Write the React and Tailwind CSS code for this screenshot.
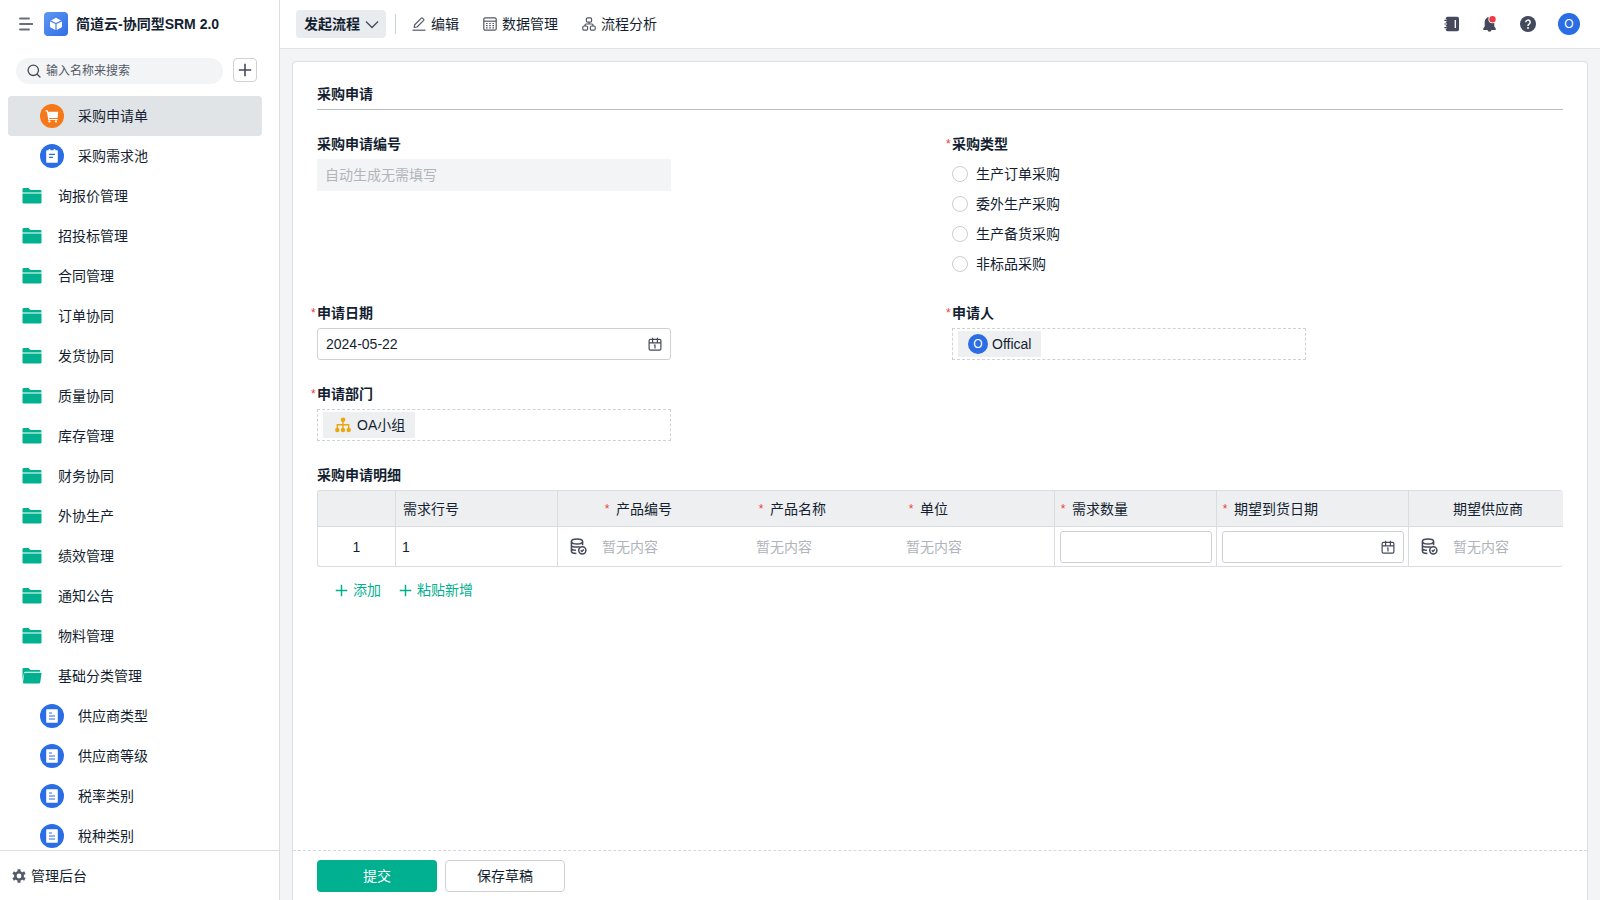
import React, { useState } from 'react';

const FOLDERS = [
  '询报价管理', '招投标管理', '合同管理', '订单协同', '发货协同', '质量协同', '库存管理',
  '财务协同', '外协生产', '绩效管理', '通知公告', '物料管理',
];
const CATEGORIES = ['供应商类型', '供应商等级', '税率类别', '稅种类别'];
const TYPES = ['生产订单采购', '委外生产采购', '生产备货采购', '非标品采购'];

const MenuIcon = () => (
  <svg width="14" height="14" viewBox="0 0 14 14" fill="none" stroke="#6a6f7b" strokeWidth="1.8" strokeLinecap="round">
    <path d="M1 1.5h9M1 7h12.500M1 12.500h9" />
  </svg>
);

const SearchIcon = () => (
  <svg width="14" height="14" viewBox="0 0 14 14" fill="none" stroke="#444a5b" strokeWidth="1.300" strokeLinecap="round">
    <circle cx="6.300" cy="6.300" r="5.200" />
    <path d="m10.200 10.200 2.800 2.800" />
  </svg>
);

const PlusIcon = ({ size = 14 }) => (
  <svg width={size} height={size} viewBox="0 0 14 14" fill="none" stroke="currentColor" strokeWidth="1.600">
    <path d="M7 .8v12.400M.8 7h12.400" />
  </svg>
);

const ChevronIcon = () => (
  <svg width="14" height="14" viewBox="0 0 14 14" fill="none" stroke="#444a5b" strokeWidth="1.300">
    <path d="m1 4.500 6 6 6-6" />
  </svg>
);

const CubeIcon = () => (
  <svg width="14" height="14" viewBox="0 0 14 14" fill="#fff">
    <path d="M7 .8 12 3.4 7 6 2 3.4z" />
    <path d="M1 4.4 6.4 7.1v6L1.6 10.4a1.2 1.2 0 0 1-.6-1z" />
    <path d="M13 4.4 7.6 7.1v6l4.8-2.7a1.2 1.2 0 0 0 .6-1z" />
  </svg>
);

const CartIcon = () => (
  <svg width="14" height="14" viewBox="0 0 14 14" fill="#fff">
    <path d="M.6 1.2h2l.5 1.5h10.1l-.6 6.400H4l.2 1h8.400v1H3.3L1.9 2.4H.6z" />
    <circle cx="4.4" cy="12.4" r="1.1" />
    <circle cx="11" cy="12.4" r="1.1" />
  </svg>
);

const NoteIcon = () => (
  <svg width="14" height="14" viewBox="0 0 14 14">
    <rect x="1.2" y="1.2" width="11.6" height="12.600" rx=".8" fill="#fff" />
    <path d="M4.5 0v2.6M9.5 0v2.6" stroke="#fff" strokeWidth="1.5" />
    <path d="M4 5.3h6M4 8.300h4" stroke="#2a6de5" strokeWidth="1.2" />
  </svg>
);

const DocIcon = () => (
  <svg width="14" height="14" viewBox="0 0 14 14">
    <rect x="1.2" y=".2" width="11.6" height="13.6" rx=".8" fill="#fff" />
    <path d="M4 4h3M4 7h6M4 10h6" stroke="#2a6de5" strokeWidth="1.1" />
  </svg>
);

const FolderIcon = () => (
  <svg width="20" height="16" viewBox="0 0 20 16" fill="#00b08f">
    <path d="M.5 4.500V1.300A1.300 1.300 0 0 1 1.800 0H6.500l2 2h9.700a1.300 1.300 0 0 1 1.300 1.300v1.200z" />
    <path d="M.5 5.500h19v8.700a1.300 1.300 0 0 1-1.300 1.300H1.800A1.300 1.300 0 0 1 .5 14.200z" />
  </svg>
);

const FolderOpenIcon = () => (
  <svg width="20" height="16" viewBox="0 0 20 16" fill="#00b08f">
    <path d="M.5 12V1.300A1.300 1.300 0 0 1 1.800 0H6.500l2 2h8.500a1.300 1.300 0 0 1 1.300 1.300v.5H3.700A1.800 1.800 0 0 0 2 5z" />
    <path d="M3.100 4.800H18.500a1 1 0 0 1 1 1.200l-1.300 8.400a1.300 1.300 0 0 1-1.300 1.100H2a1 1 0 0 1-1-1.200L2.100 5.700a1 1 0 0 1 1-.9z" />
  </svg>
);

const GearIcon = () => (
  <svg width="14" height="14" viewBox="0 0 14 14" fill="none" stroke="#525967">
    <circle cx="7" cy="7" r="3.700" strokeWidth="2.600" />
    <path d="M7 .2v2.300M7 11.500v2.300M1.100 3.600l2 1.150M10.900 9.250l2 1.150M1.100 10.400l2-1.150M10.900 4.750l2-1.150" strokeWidth="3" />
  </svg>
);

const EditIcon = () => (
  <svg width="14" height="14" viewBox="0 0 14 14" fill="none" stroke="#525967" strokeWidth="1.200" strokeLinejoin="round">
    <path d="M2.200 10.500 2.700 7.700 9.400 1.100a.8.8 0 0 1 1.100 0l1.200 1.200a.8.8 0 0 1 0 1.100L5 10z" />
    <path d="M.5 13.200h13" />
  </svg>
);

const GridIcon = () => (
  <svg width="14" height="14" viewBox="0 0 14 14" fill="none" stroke="#525967" strokeWidth="1.200">
    <rect x=".8" y=".8" width="12.400" height="12.400" rx="1.500" />
    <path d="M.8 4.200h12.400" />
    <path d="M3 6.500h1.600M6.200 6.500h1.600M9.400 6.500H11M3 8.700h1.600M6.200 8.700h1.600M9.400 8.700H11M3 10.900h1.600M6.200 10.900h1.600M9.400 10.900H11" />
  </svg>
);

const FlowIcon = () => (
  <svg width="14" height="14" viewBox="0 0 14 14" fill="none" stroke="#525967" strokeWidth="1.200">
    <rect x="4.400" y=".8" width="5.200" height="4.400" rx="1.200" />
    <rect x=".8" y="9" width="4.800" height="4.200" rx="1.200" />
    <rect x="8.400" y="9" width="4.800" height="4.200" rx="1.200" />
    <path d="M7 5v2M3 9.200V8a1 1 0 0 1 1-1h6a1 1 0 0 1 1 1v1.200" />
  </svg>
);

const NotebookIcon = () => (
  <svg width="16" height="16" viewBox="0 0 16 16">
    <rect x="1.800" y=".8" width="13.200" height="14.400" rx="1.800" fill="#444a5b" />
    <path d="M0 4.400h3M0 8h3M0 11.600h3" stroke="#fff" strokeWidth="2" />
    <path d="M.3 4.400h2.600M.3 8h2.600M.3 11.600h2.600" stroke="#444a5b" strokeWidth="1.100" />
    <path d="M11.300 4v8" stroke="#fff" strokeWidth="1.300" />
  </svg>
);

const BellIcon = () => (
  <svg width="16" height="18" viewBox="0 0 16 18">
    <path d="M7.500 2a4.800 4.800 0 0 1 4.800 4.800v4.800l1.400 1.600v1.800H1.300v-1.800l1.400-1.600V6.800A4.800 4.800 0 0 1 7.500 2z" fill="#444a5b" />
    <path d="M5.500 14.800h4a2 2 0 0 1-4 0z" fill="#444a5b" />
    <circle cx="10.500" cy="4.200" r="4.100" fill="#fff" />
    <circle cx="10.500" cy="4.200" r="3.200" fill="#ed3b40" />
  </svg>
);

const HelpIcon = () => (
  <svg width="16" height="16" viewBox="0 0 16 16">
    <circle cx="8" cy="8" r="8" fill="#444a5b" />
    <path d="M5.800 6.300a2.200 2.200 0 1 1 3.300 1.900C8.400 8.600 8 8.900 8 9.900" fill="none" stroke="#fff" strokeWidth="1.500" />
    <circle cx="8" cy="12" r=".95" fill="#fff" />
  </svg>
);

const CalendarIcon = () => (
  <svg width="14" height="14" viewBox="0 0 14 14" fill="none" stroke="#444a5b" strokeWidth="1.200">
    <rect x="1.100" y="2.400" width="11.800" height="10.800" rx="1.400" />
    <path d="M1 5.800h12M4.600.8v5M9.400.8v5M5.900 8H7v3.500" />
  </svg>
);

const DatabaseIcon = () => (
  <svg width="17" height="17" viewBox="0 0 17 17" fill="none" stroke="#444a5b" strokeWidth="1.500">
    <ellipse cx="7" cy="3.500" rx="5.600" ry="2.500" />
    <path d="M1.400 3.500v9.800c0 1.200 2 2.100 5 2.100M12.600 3.500v3.800M1.400 6.900c0 1.200 2.400 2.200 5.600 2.200 1 0 1.900-.1 2.700-.3M1.400 10.200c0 1 1.900 1.900 4.600 2.100" />
    <circle cx="12.300" cy="12.300" r="3.600" />
    <path d="m10.800 12.300 1.100 1.200 1.900-2.100" />
  </svg>
);

const DeptIcon = () => (
  <svg width="16" height="16" viewBox="0 0 16 16" fill="#eaa70d">
    <circle cx="8" cy="2.700" r="2.300" />
    <circle cx="2.300" cy="13" r="2.200" />
    <circle cx="8" cy="13" r="2.200" />
    <circle cx="13.700" cy="13" r="2.200" />
    <path d="M8 4v8M2.300 12V7.800h11.400V12" fill="none" stroke="#eaa70d" strokeWidth="1.400" />
  </svg>
);

const Star = () => <span className="w-3.5 shrink-0 pr-1 text-center text-xs text-[#ed3b40]">*</span>;

function FieldLabel({ children, required, id, htmlFor }) {
  return (
    <label id={id} htmlFor={htmlFor} className="relative flex h-[30px] items-center font-bold">
      {required && <span className="absolute right-full w-1.5 text-xs font-normal text-[#ed3b40]">*</span>}
      {children}
    </label>
  );
}

function NavItem({ icon, label, color, nested, active }) {
  return (
    <a
      href="#"
      className={`flex h-10 shrink-0 items-center rounded ${nested ? 'gap-3.5 pl-8' : 'gap-4 pl-3.5'} ${active ? 'bg-[#e1e4e7]' : ''}`}
    >
      {nested ? <span className={`flex size-6 items-center justify-center rounded-full ${color}`}>{icon}</span> : icon}
      {label}
    </a>
  );
}

function Th({ children, required, className = '' }) {
  return (
    <th className={`h-9 border-b border-[#d9dde1] bg-[#edeff0] p-0 text-left font-normal ${className}`}>
      <div className="flex items-center">
        {required && <Star />}
        {children}
      </div>
    </th>
  );
}

export default function App() {
  const [type, setType] = useState('');
  const [date, setDate] = useState('2024-05-22');

  return (
    <div className="flex h-screen overflow-hidden bg-[#f2f4f6] font-['Liberation_Sans','Noto_Sans_CJK_SC',sans-serif] text-sm text-[#141e31]">
      {/* Sidebar */}
      <aside className="flex w-70 shrink-0 flex-col border-r border-[#dcdfe2] bg-white">
        <div className="flex h-12 shrink-0 items-center pl-[19px]">
          <button aria-label="菜单"><MenuIcon /></button>
          <span className="ml-[11px] flex size-6 items-center justify-center rounded bg-linear-to-br from-[#5f97f2] to-[#2f6ee6]">
            <CubeIcon />
          </span>
          <h1 className="ml-2 font-bold">简道云-协同型SRM 2.0</h1>
        </div>
        <div className="mt-2 flex h-10 shrink-0 items-start gap-2.5 pt-0.5 pl-4">
          <label className="flex h-[26px] w-[207px] items-center gap-[5px] rounded-full bg-[#f2f4f5] pl-[11px]">
            <SearchIcon />
            <input type="text" aria-label="搜索" placeholder="输入名称来搜索" className="min-w-0 flex-1 text-xs outline-none placeholder:text-[#525967]" />
          </label>
          <button aria-label="新建" className="flex size-6 items-center justify-center rounded border border-[#ced1d6] text-[#444a5b]">
            <PlusIcon />
          </button>
        </div>
        <nav className="flex min-h-0 flex-1 flex-col overflow-hidden pr-[17px] pl-2">
          <NavItem nested active label="采购申请单" color="bg-[#f5791a]" icon={<CartIcon />} />
          <NavItem nested label="采购需求池" color="bg-[#2a6de5]" icon={<NoteIcon />} />
          {FOLDERS.map((name) => (
            <NavItem key={name} label={name} icon={<FolderIcon />} />
          ))}
          <NavItem label="基础分类管理" icon={<FolderOpenIcon />} />
          {CATEGORIES.map((name) => (
            <NavItem key={name} nested label={name} color="bg-[#2a6de5]" icon={<DocIcon />} />
          ))}
        </nav>
        <a href="#" className="flex h-[50px] shrink-0 items-center gap-[5px] border-t border-[#dcdfe2] pl-3">
          <GearIcon />
          管理后台
        </a>
      </aside>

      <div className="flex min-w-0 flex-1 flex-col">
        {/* Top bar */}
        <header className="flex h-[49px] shrink-0 items-center border-b border-[#e2e5e8] bg-white pr-5 pl-4">
          <button className="flex h-7 items-center gap-[5px] rounded bg-[#e9ecee] pr-[7px] pl-2 font-bold">
            发起流程
            <ChevronIcon />
          </button>
          <span className="mr-4 ml-[9px] h-5 w-px bg-[#ced1d6]" />
          <nav className="flex gap-6">
            <a href="#" className="flex items-center gap-[5px]"><EditIcon />编辑</a>
            <a href="#" className="flex items-center gap-[5px]"><GridIcon />数据管理</a>
            <a href="#" className="flex items-center gap-[5px]"><FlowIcon />流程分析</a>
          </nav>
          <div className="ml-auto flex items-center gap-[22px]">
            <button aria-label="通讯录"><NotebookIcon /></button>
            <button aria-label="消息"><BellIcon /></button>
            <button aria-label="帮助"><HelpIcon /></button>
            <button className="flex size-[22px] items-center justify-center rounded-full bg-[#2a6de5] text-xs text-white">O</button>
          </div>
        </header>

        {/* Form card */}
        <main className="mx-3 mt-3 flex min-h-0 flex-1 flex-col rounded-t border border-b-0 border-[#dcdfe2] bg-white">
          <form className="flex min-h-0 flex-1 flex-col" onSubmit={(e) => e.preventDefault()}>
            <div className="flex min-h-0 flex-1 flex-col gap-[19px] overflow-hidden px-6 pt-[17px]">
              <h2 className="flex h-[31px] shrink-0 items-center border-b border-[#b9bdc3] font-bold">采购申请</h2>

              <div className="grid grid-cols-2 gap-x-6 gap-y-[19px]">
                <div>
                  <FieldLabel htmlFor="serial">采购申请编号</FieldLabel>
                  <input id="serial" disabled placeholder="自动生成无需填写" className="h-8 w-[58%] bg-[#f2f4f5] px-2 placeholder:text-[#b0b4bb]" />
                </div>
                <div role="radiogroup" aria-labelledby="type-label">
                  <FieldLabel required id="type-label">采购类型</FieldLabel>
                  {TYPES.map((name) => (
                    <label key={name} className="flex h-[30px] items-center gap-2">
                      <input
                        type="radio"
                        name="type"
                        checked={type === name}
                        onChange={() => setType(name)}
                        className="size-4 appearance-none rounded-full border border-[#c9cdd2] checked:border-[5px] checked:border-[#00b08f]"
                      />
                      {name}
                    </label>
                  ))}
                </div>
                <div>
                  <FieldLabel required htmlFor="date">申请日期</FieldLabel>
                  <div className="flex h-8 w-[58%] items-center rounded-[3px] border border-[#ced1d6] px-2">
                    <input id="date" value={date} onChange={(e) => setDate(e.target.value)} className="min-w-0 flex-1 outline-none" />
                    <CalendarIcon />
                  </div>
                </div>
                <div>
                  <FieldLabel required htmlFor="member">申请人</FieldLabel>
                  <button id="member" type="button" className="flex h-8 w-[58%] items-center border border-dashed border-[#ced1d6] pl-[5px]">
                    <span className="flex h-[26px] items-center gap-1 bg-[#edeff0] px-2.5">
                      <span className="flex size-5 items-center justify-center rounded-full bg-[#2a6de5] text-xs text-white">O</span>
                      Offical
                    </span>
                  </button>
                </div>
                <div>
                  <FieldLabel required htmlFor="dept">申请部门</FieldLabel>
                  <button id="dept" type="button" className="flex h-8 w-[58%] items-center border border-dashed border-[#ced1d6] pl-[5px]">
                    <span className="flex h-[26px] items-center gap-1.5 bg-[#edeff0] pr-2.5 pl-3">
                      <DeptIcon />
                      OA小组
                    </span>
                  </button>
                </div>
              </div>

              {/* Detail rows */}
              <div>
                <h3 className="flex h-[30px] items-center font-bold">采购申请明细</h3>
                <div className="overflow-hidden rounded-[3px] border border-r-0 border-[#d9dde1]">
                  <table className="w-[1260px] min-w-full table-fixed border-separate border-spacing-0">
                    <colgroup>
                      <col className="w-[78px]" />
                      <col className="w-[162px]" />
                      <col className="w-9" />
                      <col className="w-[154px]" />
                      <col className="w-[150px]" />
                      <col className="w-[157px]" />
                      <col className="w-[162px]" />
                      <col className="w-[192px]" />
                      <col className="w-9" />
                      <col />
                    </colgroup>
                    <thead>
                      <tr>
                        <Th className="border-r" />
                        <Th className="border-r pl-[7px]">需求行号</Th>
                        <Th />
                        <Th required className="pl-2">产品编号</Th>
                        <Th required className="pl-2">产品名称</Th>
                        <Th required className="border-r pl-2">单位</Th>
                        <Th required className="border-r pl-[3px]">需求数量</Th>
                        <Th required className="border-r pl-[3px]">期望到货日期</Th>
                        <Th />
                        <Th className="pl-2">期望供应商</Th>
                      </tr>
                    </thead>
                    <tbody>
                      <tr className="h-[39px] text-[#b0b4bb]">
                        <td className="border-r border-[#d9dde1] text-center text-[#141e31]">1</td>
                        <td className="border-r border-[#d9dde1] pl-1.5 text-[#141e31]">1</td>
                        <td className="pl-3"><DatabaseIcon /></td>
                        <td className="pl-2">暂无内容</td>
                        <td className="pl-2">暂无内容</td>
                        <td className="border-r border-[#d9dde1] pl-2">暂无内容</td>
                        <td className="border-r border-[#d9dde1] pr-1 pl-[5px]">
                          <input aria-label="需求数量" className="block h-8 w-full rounded-[3px] border border-[#ced1d6] px-2 text-[#141e31]" />
                        </td>
                        <td className="border-r border-[#d9dde1] pr-1 pl-[5px]">
                          <div className="flex h-8 items-center rounded-[3px] border border-[#ced1d6] px-2">
                            <input aria-label="期望到货日期" className="min-w-0 flex-1 text-[#141e31] outline-none" />
                            <CalendarIcon />
                          </div>
                        </td>
                        <td className="pl-3"><DatabaseIcon /></td>
                        <td className="pl-2">暂无内容</td>
                      </tr>
                    </tbody>
                  </table>
                </div>
                <div className="mt-[13px] flex gap-[18px] pl-[18px] text-[#00b08f]">
                  <button type="button" className="flex items-center gap-[5px]"><PlusIcon size={13} />添加</button>
                  <button type="button" className="flex items-center gap-[5px]"><PlusIcon size={13} />粘贴新增</button>
                </div>
              </div>
            </div>

            <footer className="flex h-[50px] shrink-0 items-center gap-2 border-t border-dashed border-[#d5d9dd] px-6">
              <button type="submit" className="h-8 w-30 rounded bg-[#00b08f] text-white">提交</button>
              <button type="button" className="h-8 w-30 rounded border border-[#ced1d6]">保存草稿</button>
            </footer>
          </form>
        </main>
      </div>
    </div>
  );
}
